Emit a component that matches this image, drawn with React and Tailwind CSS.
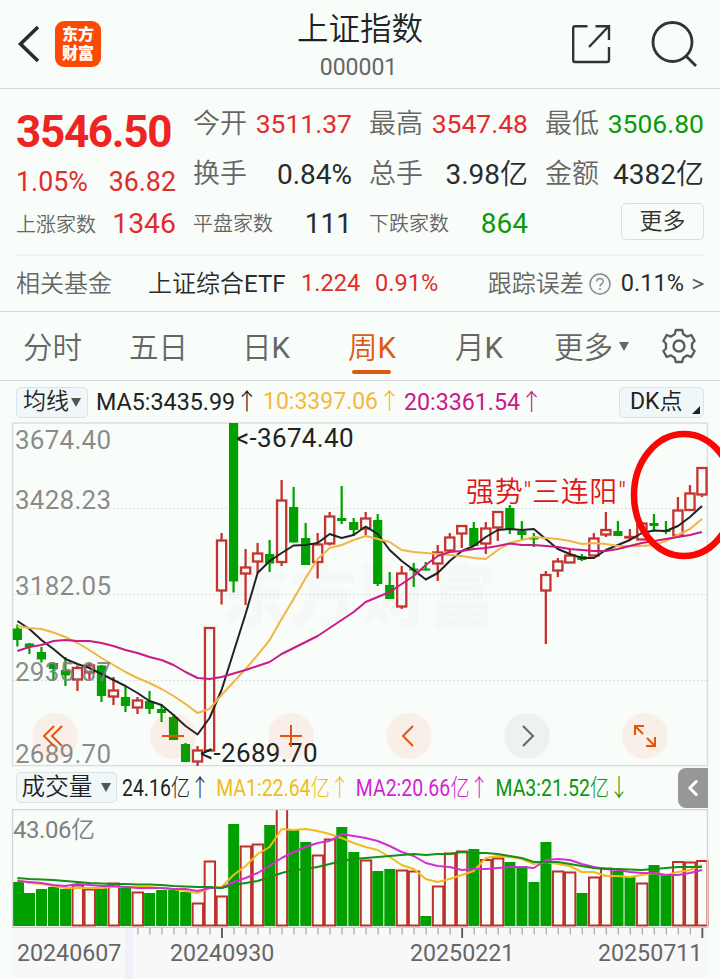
import { ChevronLeft } from 'lucide-react';

const STEP = 12.01;
const xAt = (i) => 17.4 + i * STEP;

// [direction, high, bodyTop, bodyBottom, low]
const candles = [
  ['d', 624.5, 628.5, 640, 646.5], ['d', 643, 643.5, 647, 654], ['d', 647, 652, 659.5, 662.5], ['d', 662, 663, 669, 681],
  ['d', 657, 670, 675.5, 686], ['u', 665.5, 667.5, 680, 691], ['u', 663, 665, 673, 679], ['d', 665, 665.5, 696, 702],
  ['u', 677, 690, 697, 705], ['d', 687, 697, 706, 712], ['u', 697, 700, 708, 714], ['d', 691, 701, 709, 714],
  ['d', 704, 709, 713, 722], ['d', 714, 717, 740, 740], ['d', 743, 744, 762, 762], ['u', 746, 750, 762, 766],
  ['u', 627, 627.5, 751, 751], ['u', 533, 540, 591, 604.5], ['d', 423, 423, 581.5, 592.5], ['u', 549, 567, 574, 605],
  ['u', 543, 553, 562, 573], ['d', 540, 554, 563.5, 572], ['u', 480, 500, 562.5, 566], ['d', 487, 507, 542.5, 542.5],
  ['d', 523, 538, 565, 565], ['u', 533, 544, 562.5, 578.5], ['u', 512, 516, 544, 545.5], ['d', 486, 518, 521, 524],
  ['d', 518, 522, 530, 536], ['u', 512, 518, 529, 535], ['d', 514, 520, 584, 586], ['d', 572, 585, 599, 599],
  ['u', 566, 573, 607, 609], ['d', 563, 568.5, 570.5, 587], ['d', 562, 568.5, 570.5, 570.5], ['u', 545, 552, 564, 581],
  ['u', 533, 537, 551, 552], ['u', 525, 525.5, 534, 548], ['d', 522, 528, 546, 546], ['u', 522, 528, 544, 554],
  ['u', 511, 511.5, 528, 541], ['d', 505, 508, 529, 534], ['d', 521, 531, 535, 540], ['d', 533, 537.5, 539.5, 547],
  ['u', 571, 574.5, 591, 644], ['u', 558, 561, 571, 577], ['u', 549, 555, 563, 563], ['d', 554, 556, 560, 561],
  ['u', 533, 538, 556, 556], ['u', 512, 529.5, 535, 537], ['d', 521, 531, 536, 536], ['u', 529, 536.5, 538, 540],
  ['u', 522, 523, 540, 540], ['d', 514, 523, 526, 530.5], ['d', 521, 530, 532, 534], ['u', 497, 510, 536, 536],
  ['u', 485, 493, 510.5, 511], ['u', 467, 467.5, 495, 497],
];

const ma5 = [
  621, 629, 640, 649, 659, 664, 668, 674, 680, 686, 693, 701, 705, 715, 726, 734.5, 718, 690, 652, 614, 573, 561, 553, 545.5, 545, 543, 534,
  538, 535, 526.5, 534, 550, 561, 570, 579.5, 573, 561, 551, 546, 537, 530, 529, 530, 529, 539, 549, 554, 558, 558, 550, 545, 540, 533, 530.5,
  531, 526, 517, 506,
];
const ma10 = [
  626, 628, 629, 632.5, 637, 643, 650, 658, 665, 672, 678, 683, 689, 696, 704, 713, 709, 695, 682, 669, 655, 640, 619, 599, 578, 559, 548,
  545, 540, 536, 539, 542, 550, 552, 553, 554, 555, 556, 558, 559, 550, 543, 540, 537, 538, 539, 541, 544, 543, 544, 546, 546, 546, 545, 541,
  535, 529, 519,
];
const ma20 = [
  651, 647, 645, 641, 640, 641, 641, 643, 646, 650, 653, 657, 660, 665, 672, 678, 679, 677, 673.5, 670, 666, 662, 654, 648, 642, 636, 628,
  620, 612, 602, 597, 592, 584, 576, 565, 556, 552, 551, 549, 548, 546, 543.5, 545, 545, 546, 547, 549, 550, 551, 551, 549, 546, 543, 541,
  539, 537, 535, 532,
];

const volumeTops = [
  882, 893, 889, 887, 889, 885, 889, 888, 883, 887, 892, 893, 890, 890, 892, 903, 861, 896, 824, 846, 844, 825, 800, 829, 842, 855, 839, 827,
  852, 860, 871, 869, 870, 871, 916, 886, 853, 851, 849, 859.5, 858, 862, 866, 882, 842, 871, 872, 893, 877, 868, 871, 877, 883, 865, 875,
  861.5, 862, 860.5,
];
// volume bars whose colour differs from the candle of the same week
const volumeFlips = [33, 44, 51];

const volMa1 = [
  880, 883, 884, 886, 888, 888, 888, 888, 887, 887, 887, 887, 888, 889, 891, 893, 888, 887, 875, 866, 854, 847, 829, 830, 829, 831, 834, 838,
  843, 847, 850, 857, 865, 869, 879, 882, 879, 875, 871, 858, 856, 857, 859, 864, 862, 864, 866, 872, 872, 876, 876, 877, 875, 873, 875, 872,
  870, 865,
];
const volMa2 = [
  881, 882, 883, 885, 886, 884, 885, 886, 886, 887, 888, 888, 888, 889, 889, 891, 888, 888, 882, 878, 873, 866, 858, 852, 847, 843, 841, 834,
  836, 838, 841, 846, 852, 856, 863, 866, 867, 870, 869, 869, 868, 867, 867, 868, 860, 859, 860, 864, 867, 869, 870, 872, 873, 873, 875, 875,
  873, 870,
];
const volMa3 = [
  878, 879, 879.5, 880, 881, 882, 883, 883.5, 884, 884, 884.5, 884.5, 885, 886, 886.5, 887, 887, 888, 885, 883, 881, 877, 873, 870, 869, 867,
  864, 861, 859, 858, 857, 856, 855, 854, 855, 854, 854, 852, 853, 853, 854, 856, 858, 862, 862, 862, 864, 866, 868, 869, 869, 869.5, 870, 869,
  868, 867, 867, 867,
];

const toPoints = (ys) => ys.map((y, i) => `${xAt(i)},${y}`).join(' ');

function Line({ ys, color }) {
  return <polyline points={toPoints(ys)} fill="none" stroke={color} strokeWidth="2" strokeLinejoin="round" />;
}

function Candle({ x, data }) {
  const [dir, high, top, bottom, low] = data;
  if (dir === 'd') {
    return (
      <g fill="#00a000">
        <rect x={x - 1.1} y={high} width="2.2" height={low - high} />
        <rect x={x - 4.6} y={top} width="9.2" height={bottom - top} />
      </g>
    );
  }
  return (
    <g stroke="#c43430" strokeWidth="2.3" fill="none">
      <path d={`M${x} ${high}V${top}M${x} ${bottom}V${low}`} />
      <rect x={x - 4.6} y={top + 0.5} width="9.2" height={Math.max(bottom - top - 1, 0.5)} />
    </g>
  );
}

function Stat({ label, value, color = 'text-[28px] text-[#2b2b2b]', small }) {
  return (
    <div className="flex items-center justify-between whitespace-nowrap">
      <span className={`font-[350] text-[#666] ${small ? 'text-[20px]' : 'text-[27px]'}`}>{label}</span>
      <span className={color}>{value}</span>
    </div>
  );
}

function Header() {
  return (
    <header className="flex h-[89px] items-center justify-between border-b border-[#d3d6d8] pl-[17px] pr-[22px]">
      <div className="flex w-[130px] items-center gap-[14px]">
        <svg width="24" height="40" viewBox="0 0 24 40" fill="none" stroke="#2b2b2b" strokeWidth="3.6">
          <path d="M21 3L3.5 20L21 37" />
        </svg>
        <div className="flex size-[46px] flex-col items-center justify-center rounded-[9px] bg-[#fc4a04] text-[16px] leading-[19px] font-black text-white">
          <span>东方</span>
          <span>财富</span>
        </div>
      </div>
      <div className="flex flex-col items-center pt-[8px] pl-[2px]">
        <h1 className="pl-[3px] text-[31.5px] leading-[38px] font-[350] text-[#222]">上证指数</h1>
        <p className="text-[23px] leading-[37px] text-[#666]">000001</p>
      </div>
      <div className="flex w-[130px] items-center justify-end gap-[38px]">
        <svg width="42" height="42" viewBox="0 0 42 42" fill="none" stroke="#333" strokeWidth="2.4">
          <path d="M17.5 3.2H5Q3.2 3.2 3.2 5V37Q3.2 39 5 39H37Q39 39 39 37V24M25.5 3.2H39V17M38.5 3.5L19 24" />
        </svg>
        <svg width="48" height="48" viewBox="0 0 48 48" fill="none" stroke="#333" strokeWidth="2.8">
          <circle cx="22.5" cy="22" r="19.5" />
          <path d="M36 36L46 46" />
        </svg>
      </div>
    </header>
  );
}

function Quote() {
  return (
    <section className="mx-4 grid h-[167px] grid-cols-[160px_159px_159px_159px] gap-x-[17px] border-b-2 border-[#f0f2f1] pt-[10px]">
      <div className="flex flex-col">
        <div className="h-[65px] text-[44px] leading-[66px] font-bold tracking-[-1.3px] text-[#ee2424]">3546.50</div>
        <div className="flex h-[37px] items-center justify-between text-[26.8px] text-[#e12c2c]">
          <span>1.05%</span>
          <span>36.82</span>
        </div>
        <div className="h-[47px] [&>div]:h-full">
          <Stat small label="上涨家数" value="1346" color="text-[28.4px] text-[#e12c2c]" />
        </div>
      </div>
      <div className="grid h-[149px] grid-rows-[50px_51px_48px]">
        <Stat label="今开" value="3511.37" color="text-[26.5px] text-[#e12c2c]" />
        <Stat label="换手" value="0.84%" />
        <Stat small label="平盘家数" value="111" />
      </div>
      <div className="grid h-[149px] grid-rows-[50px_51px_48px]">
        <Stat label="最高" value="3547.48" color="text-[26.5px] text-[#e12c2c]" />
        <Stat label="总手" value={<>3.98<span className="font-[350]">亿</span></>} />
        <Stat small label="下跌家数" value="864" color="text-[28px] text-[#0a9a0a]" />
      </div>
      <div className="grid h-[149px] grid-rows-[50px_51px_48px]">
        <Stat label="最低" value="3506.80" color="text-[26.5px] text-[#0a9a0a]" />
        <Stat label="金额" value={<>4382<span className="font-[350]">亿</span></>} />
        <button className="mt-[3px] h-[37px] w-[83px] justify-self-end rounded-[5px] border border-[#dcdfdf] text-[23px] leading-[36px] font-[350] text-[#333]">更多</button>
      </div>
    </section>
  );
}

function FundRow() {
  return (
    <section className="flex h-[56px] items-center border-b border-[#d3d6d8] pr-4 pl-4 text-[23.6px] whitespace-nowrap">
      <span className="w-[132px] text-[24px] font-[350] text-[#666]">相关基金</span>
      <span className="w-[153px] text-[24px] text-[#2b2b2b]"><span className="font-[350]">上证综合</span>ETF</span>
      <span className="w-[74px] text-[#e12c2c]">1.224</span>
      <span className="text-[#e12c2c]">0.91%</span>
      <span className="ml-auto text-[24px] font-[350] text-[#666]">跟踪误差</span>
      <svg className="ml-[5px]" width="22" height="22" viewBox="0 0 22 22" fill="none" stroke="#8a8a8a" strokeWidth="1.5">
        <circle cx="11" cy="11" r="10" />
        <path d="M7.8 8.6C7.8 4.6 14.2 4.6 14.2 8.4C14.2 11 11 10.6 11 13.4M11 15V17" />
      </svg>
      <span className="ml-[10px] text-[#2b2b2b]">0.11%</span>
      <svg className="ml-[8px]" width="12" height="14" viewBox="0 0 12 14" fill="none" stroke="#555" strokeWidth="1.8">
        <path d="M1 2.5L10.5 7L1 11.5" />
      </svg>
    </section>
  );
}

function Tabs() {
  return (
    <nav className="flex h-[69px] items-center border-b border-[#d3d6d8] pl-[23px] text-[29.5px] font-[350] whitespace-nowrap text-[#666]">
      <span className="w-[106px] pt-[4px]">分时</span>
      <span className="w-[113px] pt-[4px]">五日</span>
      <span className="w-[106px] pt-[4px]">日<span className="font-normal">K</span></span>
      <span className="relative w-[107px] pt-[4px] text-[#dd5a14]">
        周<span className="font-normal">K</span>
        <span className="absolute bottom-[-4px] left-[4px] h-1 w-[39px] rounded-full bg-[#dd5a14]" />
      </span>
      <span className="w-[99px] pt-[4px]">月<span className="font-normal">K</span></span>
      <span className="pt-[4px]">更多</span>
      <svg className="ml-[6px]" width="10" height="9" viewBox="0 0 10 9" fill="#666"><path d="M0 0H10L5 9Z" /></svg>
      <svg className="ml-[32px]" width="36" height="36" viewBox="0 0 36 36" fill="none" stroke="#5c5c5c" strokeWidth="2.4" strokeLinejoin="round">
        <path d="M14.8 2H21.2L22.3 6.3L26 8.6L30.3 7L33.6 13L31 15.5V20.5L33.6 23L30.3 29L26 27.4L22.3 29.7L21.2 34H14.8L13.7 29.7L10 27.4L5.7 29L2.4 23L5 20.5V15.5L2.4 13L5.7 7L10 8.6L13.7 6.3Z" />
        <circle cx="18" cy="18" r="5.5" />
      </svg>
    </nav>
  );
}

function MaBar() {
  return (
    <div className="flex h-[42px] items-center pt-[1px] pr-4 pl-4 text-[23px] whitespace-nowrap">
      <div className="flex h-[31px] w-[72px] items-center justify-center gap-[2px] rounded-[5px] border border-[#dbe1e4] bg-[#f0f7f9]">
        <span className="font-[350] text-[#222]">均线</span>
        <svg width="10" height="9" viewBox="0 0 10 9" fill="#555"><path d="M0 0H10L5 9Z" /></svg>
      </div>
      <span className="ml-[8px] w-[167px] text-[23.3px] text-[#222]">MA5:3435.99<span className="font-light">↑</span></span>
      <span className="w-[141px] text-[#f5b83d]">10:3397.06<span className="font-light">↑</span></span>
      <span className="text-[23.2px] text-[#c9188a]">20:3361.54<span className="font-light">↑</span></span>
      <div className="relative ml-auto flex h-[31px] w-[85px] items-center rounded-[5px] border border-[#dbe1e4] bg-[#f0f7f9] pl-[10px] text-[#222]">
        DK<span className="font-[350]">点</span>
        <svg className="absolute right-[3px] bottom-[3px]" width="8" height="8" viewBox="0 0 8 8" fill="#222"><path d="M8 0V8H0Z" /></svg>
      </div>
    </div>
  );
}

const controls = [
  { name: 'first', d: 'M-1 -10L-11 0L-1 10M7 -10L-3 0L7 10' },
  { name: 'minus', d: 'M-11 0H11' },
  { name: 'plus', d: 'M-11 0H11M0 -11V11' },
  { name: 'prev', d: 'M4 -10L-6 0L4 10' },
  { name: 'next', d: 'M-4 -10L6 0L-4 10', muted: true },
  { name: 'expand', d: 'M-10 -1V-10H-1M-10 -10L-2 -2M10 1V10H1M10 10L2 2' },
];

function KChart() {
  return (
    <div className="relative h-[343px]">
      <svg className="block overflow-visible" width="720" height="343" viewBox="0 423 720 343" fontFamily='Roboto, "Noto Sans CJK SC", sans-serif'>
        <text x="220" y="621" fontSize="68" fontWeight="900" fill="#f6f8f8" textLength="276">东方财富</text>
        <rect x="12.5" y="423" width="695" height="342.6" fill="none" stroke="#d9dddb" strokeWidth="1.4" />
        <path d="M13 508.5H707M13 594.5H707M13 680.5H707" stroke="#dcdcdc" strokeDasharray="2 2" />
        {candles.map((c, i) => <Candle key={i} x={xAt(i)} data={c} />)}
        <Line ys={ma5} color="#222" />
        <Line ys={ma10} color="#f2b544" />
        <Line ys={ma20} color="#cc1a86" />
        <g fontSize="26" fill="#808080" fillOpacity="0.92">
          <text x="15" y="448.5" textLength="96">3674.40</text>
          <text x="15" y="508.5" textLength="96">3428.23</text>
          <text x="15" y="595" textLength="96">3182.05</text>
          <text x="15" y="681" textLength="96">2935.87</text>
          <text x="15" y="763" textLength="96">2689.70</text>
        </g>
        <g fontSize="26" fill="#222">
          <text x="236" y="447" textLength="117.5">&lt;-3674.40</text>
          <text x="200" y="762" textLength="117.5">&lt;-2689.70</text>
        </g>
        <text x="466" y="501.5" fontSize="28" fontWeight="350" fill="#e01515" textLength="160">强势"三连阳"</text>
        <ellipse cx="684" cy="495" rx="50" ry="61" fill="none" stroke="#fb0505" strokeWidth="6.5" />
      </svg>
      <div className="absolute bottom-[7px] left-8 flex gap-[72px]">
        {controls.map((c) => (
          <button key={c.name} className={`size-[46px] rounded-full ${c.muted ? 'bg-[#808080]/9' : 'bg-[#ff4a14]/8'}`}>
            <svg width="46" height="46" viewBox="-23 -23 46 46" fill="none" stroke={c.muted ? '#666' : '#e0580f'} strokeWidth="2">
              <path d={c.d} />
            </svg>
          </button>
        ))}
      </div>
    </div>
  );
}

function VolumeBar() {
  return (
    <div className="flex h-[43px] items-center pr-3 pl-4 whitespace-nowrap">
      <div className="flex h-[31px] w-[101px] shrink-0 items-center justify-center gap-[9px] rounded-[5px] border border-[#dbe1e4] bg-[#f0f7f9]">
        <span className="text-[23.6px] font-[350] text-[#222]">成交量</span>
        <svg width="10" height="9" viewBox="0 0 10 9" fill="#555"><path d="M0 0H10L5 9Z" /></svg>
      </div>
      <div className="ml-[5px] flex w-[540px] shrink-0 origin-left scale-x-[0.804] gap-[8px] pt-[2px] text-[24.2px]">
        <span className="text-[#222]">24.16<span className="font-light">亿↑</span></span>
        <span className="text-[#f2bb1c]">MA1:22.64<span className="font-light">亿↑</span></span>
        <span className="text-[#d41fd4]">MA2:20.66<span className="font-light">亿↑</span></span>
        <span className="text-[#109410]">MA3:21.52<span className="font-light">亿↓</span></span>
      </div>
      <button className="ml-auto flex h-[40px] w-[30px] shrink-0 items-center justify-center rounded-l-[8px] bg-[#979797] text-white">
        <ChevronLeft size={26} strokeWidth={2.8} />
      </button>
    </div>
  );
}

function VolumeChart() {
  return (
    <svg className="block" width="720" height="119" viewBox="0 809 720 119" fontFamily='Roboto, "Noto Sans CJK SC", sans-serif'>
      <text x="13" y="837.5" fontSize="24" fill="#808080" textLength="82">43.06<tspan fontWeight="350">亿</tspan></text>
      {volumeTops.map((top, i) => {
        const x = xAt(i);
        const up = (candles[i][0] === 'u') !== volumeFlips.includes(i);
        return up ? (
          <rect key={i} x={x - 4.9} y={top + 0.5} width="10.4" height={925 - top} fill="#f9fdfa" stroke="#bf302b" strokeWidth="2" />
        ) : (
          <rect key={i} x={Math.max(x - 5.4, 13)} y={top} width="11" height={926 - top} fill="#00a000" />
        );
      })}
      <Line ys={volMa1} color="#f2bb1c" />
      <Line ys={volMa2} color="#d42fd4" />
      <Line ys={volMa3} color="#158f15" />
      <path d="M12.5 928V809.5H707.5V928" fill="none" stroke="#d3d7d5" strokeWidth="1.4" />
      <path d="M12 927.3H708" stroke="#c9cdcb" strokeWidth="1.2" />
    </svg>
  );
}

function TimeAxis() {
  return (
    <div className="mr-3 ml-3 h-[51px] bg-[linear-gradient(to_right,#f8f8f8_113px,#eff3f9_113px,#eff3f9_121px,#f8f8f8_121px)]">
      <svg className="block" width="696" height="10" viewBox="12 928 696 10">
        {Array.from({ length: 48 }, (_, i) => {
          const n = i + 10;
          const major = n === 17 || n === 37 || n === 57;
          return <path key={n} d={`M${xAt(n) + 0.4} 928V${major ? 938 : 934.5}`} stroke={major ? '#555' : '#a8a8a8'} strokeWidth={major ? 1.8 : 1.3} />;
        })}
      </svg>
      <div className="flex pl-[5px] text-[23.2px] leading-[30px] text-[#666]">
        <span className="w-[153px]">20240607</span>
        <span className="w-[240px]">20240930</span>
        <span className="w-[188px]">20250221</span>
        <span>20250711</span>
      </div>
    </div>
  );
}

export default function App() {
  return (
    <div className="h-[979px] w-[720px] overflow-hidden bg-[#f9fdfa] font-[Roboto,'Noto_Sans_CJK_SC',sans-serif]">
      <Header />
      <Quote />
      <FundRow />
      <Tabs />
      <MaBar />
      <KChart />
      <VolumeBar />
      <VolumeChart />
      <TimeAxis />
    </div>
  );
}
